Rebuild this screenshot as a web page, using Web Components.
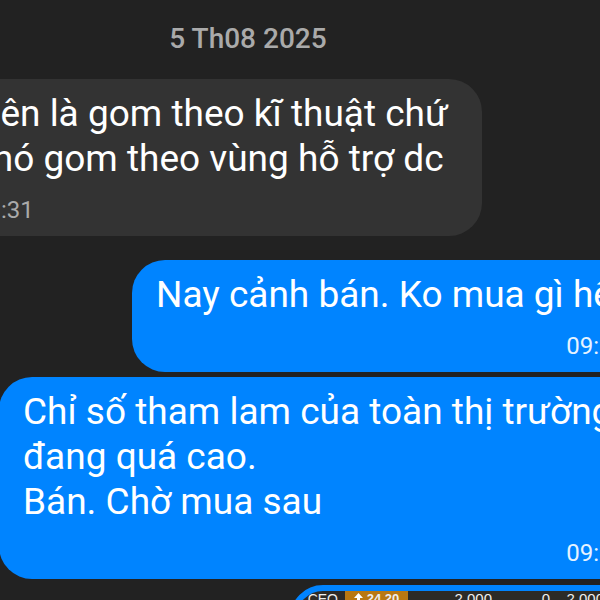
<!DOCTYPE html>
<html lang="vi">
<head>
<meta charset="utf-8">
<meta name="viewport" content="width=device-width, initial-scale=1">
<title>Chat</title>
<style>
    body {
        margin: 0;
        height: 100vh;
        overflow: hidden;
        background: #222;
        font-family: Roboto, "Noto Sans", sans-serif;
    }

    .regular { width: 76%; }
    .short { width: 74%; }
    .long { width: 93%; }
</style>
</head>
<body>
<chat-thread>
    <chat-date>5 Th08 2025</chat-date>
    <chat-message class="regular" time="09:31">Nên là gom theo kĩ thuật chứ<br>khó gom theo vùng hỗ trợ dc</chat-message>
    <chat-message class="short" sent first time="09:22">Nay cảnh bán. Ko mua gì hết</chat-message>
    <chat-message class="long" sent time="09:22">Chỉ số tham lam của toàn thị trường<br>đang quá cao.<br>Bán. Chờ mua sau</chat-message>
    <chat-picture>
        <stock-row name="CEO" price="24.20" cells="2.000,0,2.000"></stock-row>
    </chat-picture>
</chat-thread>

<script>
class ChatThread extends HTMLElement {
    constructor() {
        super();
        this.attachShadow({mode: 'open'}).innerHTML = `
            <style>
                :host {
                    display: block;
                    height: 100%;
                    overflow: hidden;
                }

                /* the thread is wider than the window on both sides */
                main {
                    display: flex;
                    flex-direction: column;
                    align-items: flex-start;
                    gap: 5px;
                    margin: 0 -50px;
                    padding-top: 23px;
                }
            </style>
            <main><slot></slot></main>
        `;
    }
}

class ChatDate extends HTMLElement {
    constructor() {
        super();
        this.attachShadow({mode: 'open'}).innerHTML = `
            <style>
                :host {
                    display: block;
                    align-self: stretch;
                    margin-right: 104px;
                    margin-bottom: 19px;
                    text-align: center;
                    font-size: 28px;
                    line-height: 32px;
                    font-weight: 500;
                    color: #aaa;
                }
            </style>
            <slot></slot>
        `;
    }
}

class ChatMessage extends HTMLElement {
    constructor() {
        super();
        this.attachShadow({mode: 'open'});
    }

    connectedCallback() {
        this.render();
    }

    render() {
        this.shadowRoot.innerHTML = `
            <style>
                :host {
                    display: flex;
                    flex-direction: column;
                    gap: 15px;
                    box-sizing: border-box;
                    padding: 12px 24px;
                    border-radius: 33px;
                    background: #333;
                    color: #fff;
                    font-size: 37px;
                    line-height: 45px;
                    white-space: nowrap;
                }

                :host([sent]) {
                    align-self: flex-end;
                    background: #0084ff;
                }

                :host([first]) {
                    margin-top: 19px;
                }

                time {
                    font-size: 24px;
                    line-height: 28px;
                    color: #aaa;
                }

                :host([sent]) time {
                    align-self: flex-end;
                    color: #e6f3ff;
                }
            </style>
            <div><slot></slot></div>
            <time>${this.getAttribute('time')}</time>
        `;
    }
}

class ChatPicture extends HTMLElement {
    constructor() {
        super();
        this.attachShadow({mode: 'open'}).innerHTML = `
            <style>
                :host {
                    display: block;
                    align-self: flex-end;
                    box-sizing: border-box;
                    width: 360px;
                    margin-top: 1px;
                    border: 6px solid #0084ff;
                    border-radius: 33px;
                    overflow: hidden;
                    background: #2c2b27;
                }
            </style>
            <slot></slot>
        `;
    }
}

class StockRow extends HTMLElement {
    constructor() {
        super();
        this.attachShadow({mode: 'open'});
    }

    connectedCallback() {
        this.render();
    }

    render() {
        const cells = this.getAttribute('cells').split(',').map(c => `<td>${c}</td>`).join('');
        this.shadowRoot.innerHTML = `
            <style>
                :host {
                    display: block;
                    /* the photo goes on below this row */
                    min-height: 80px;
                    font-family: "Liberation Sans", sans-serif;
                    font-size: 15px;
                    line-height: 16px;
                    color: #eee;
                }

                table {
                    width: 100%;
                    border-collapse: collapse;
                    table-layout: fixed;
                }

                th, td {
                    padding: 0;
                    font-weight: 400;
                    text-align: right;
                }

                th {
                    padding-right: 7px;
                    font-size: 14px;
                }

                .name { width: 49px; }
                .price { width: 63px; }
                .wide { width: 84px; }
                .mid { width: 58px; }
                .last { width: 54px; }

                .chip {
                    display: flex;
                    align-items: center;
                    justify-content: center;
                    gap: 4px;
                    background: #b87812;
                    font-size: 13px;
                    font-weight: 700;
                }
            </style>
            <table>
                <colgroup><col class="name"><col class="price"><col class="wide"><col class="mid"><col class="last"><col></colgroup>
                <tr>
                    <th scope="row">${this.getAttribute('name')}</th>
                    <td><span class="chip">
                        <svg width="9" height="12" viewBox="0 0 9 12" aria-hidden="true"><path d="M4.5 0L9 5H6v7H3V5H0z" fill="#fff"/></svg>
                        ${this.getAttribute('price')}
                    </span></td>
                    ${cells}
                    <td></td>
                </tr>
            </table>
        `;
    }
}

customElements.define('chat-thread', ChatThread);
customElements.define('chat-date', ChatDate);
customElements.define('chat-message', ChatMessage);
customElements.define('chat-picture', ChatPicture);
customElements.define('stock-row', StockRow);
</script>
</body>
</html>
